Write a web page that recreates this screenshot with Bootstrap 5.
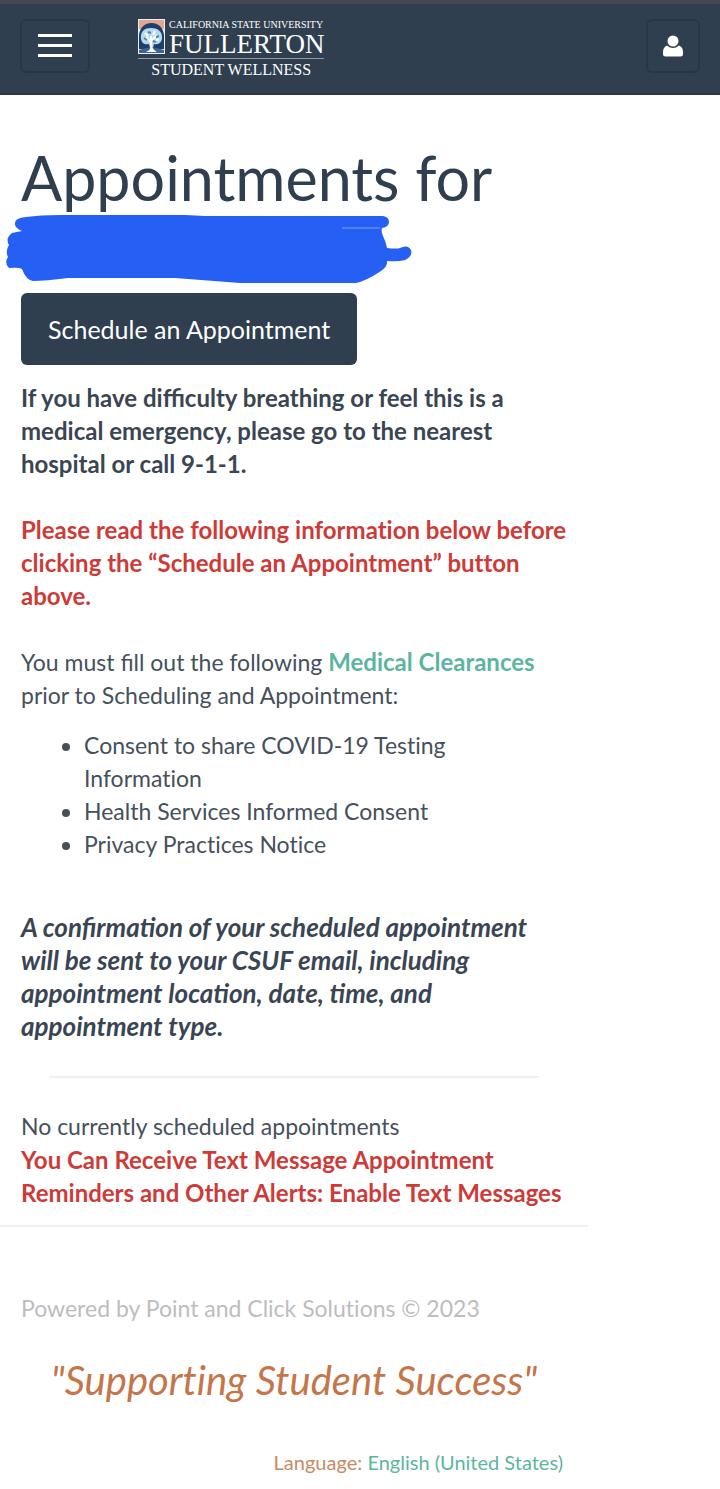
<!DOCTYPE html>
<html lang="en">

<head>
    <meta charset="UTF-8">
    <meta name="viewport" content="width=device-width, initial-scale=1">
    <title>Appointments - Student Wellness</title>
    <link href="https://cdn.jsdelivr.net/npm/bootstrap@5.3.3/dist/css/bootstrap.min.css" rel="stylesheet">
    <style>
        body {
            font-family: Lato, "Liberation Sans", sans-serif;
            font-size: 23px;
            line-height: 33px;
            color: #46505c;
            font-variant-ligatures: no-common-ligatures;
        }

        .with-liga {
            font-variant-ligatures: normal;
        }

        .site-bar {
            background-color: #303f50;
            border-top: 4px solid #45494f;
            border-bottom: 2px solid #2b3848;
            padding: 15px 20px 14px;
        }

        .bar-btn {
            height: 54px;
            border: 2px solid #27374a;
            border-radius: 6px;
            color: #fff;
        }

        .bar-btn.menu-btn {
            width: 70px;
        }

        .bar-btn.user-btn {
            width: 54px;
        }

        .brand {
            font-family: "Liberation Serif", serif;
            color: #fff;
            margin-left: 48px;
        }

        .brand-uni {
            font-size: 10px;
            line-height: 12px;
        }

        .brand-city {
            font-size: 27px;
            line-height: 26px;
        }

        .brand-unit {
            font-size: 16px;
            line-height: 18px;
            border-top: 1px solid #8d99a8;
            margin-top: 1px;
            padding-top: 2px;
        }

        .page-wrap {
            max-width: 588px;
        }

        .page-pad {
            padding-left: 21px;
            padding-right: 21px;
        }

        .page-title {
            font-size: 61px;
            line-height: 70px;
            color: #303f50;
        }

        .scribble {
            margin-left: -16px;
        }

        .btn-schedule {
            background-color: #303f50;
            color: #fff;
            font-size: 25px;
            line-height: 32px;
            padding: 19px 26px;
            border-radius: 6px;
        }

        .strong-text {
            font-size: 24px;
            font-weight: 700;
        }

        .note-text {
            font-size: 26px;
        }

        .ink {
            color: #3a4553;
        }

        .alert-text {
            color: #cd3b38;
        }

        .link-teal {
            color: #5cb5a0;
        }

        .form-list {
            margin: 17px 0 50px;
            padding-left: 63px;
        }

        .thin-rule {
            margin: 33px 28px 32px;
            border-top: 2px solid #eff0f1;
            opacity: 1;
        }

        .page-foot {
            border-top: 2px solid #f0f0f1;
            padding-top: 65px;
        }

        .powered {
            color: #bdbdbf;
        }

        .motto {
            font-size: 40px;
            line-height: 48px;
            color: #c4764a;
            margin: 31px 0 43px;
        }

        .lang-line {
            font-size: 20px;
            line-height: 30px;
            color: #c98a62;
            padding-right: 4px;
        }
    </style>
</head>

<body>
    <!-- Top bar -->
    <header class="site-bar d-flex align-items-start">
        <button type="button" class="btn bar-btn menu-btn p-0 d-flex align-items-center justify-content-center" aria-label="Menu">
            <svg width="36" height="26" viewBox="0 0 36 26" fill="#fff">
                <rect x="1" y="1" width="34" height="3" />
                <rect x="1" y="11" width="34" height="3" />
                <rect x="1" y="21" width="34" height="3" />
            </svg>
        </button>
        <a href="#" class="brand text-decoration-none text-nowrap">
            <span class="d-flex">
                <svg class="me-1 flex-shrink-0" width="27" height="35" viewBox="0 0 27 35">
                    <rect width="27" height="35" fill="#e8eef4" />
                    <rect x="1" y="1" width="25" height="9" fill="#e2a78e" />
                    <path d="M1 16C2 8 7 4 13.500 4S25 8 26 16V30H1Z" fill="#1d3f6c" />
                    <path d="M3 20C2 12 7 9 13 9S25 12 24 20C23 25 18 26 16 25L15 29L21 32H6L12 29L11 25C8 26 4 25 3 20Z" fill="#b9d8ee" />
                    <path d="M13 32V17M13 23L8 18M14 21L19 16M7 14L10 17M17 12L15 16M21 20L17 22" stroke="#fff" stroke-width="2" fill="none" />
                    <path d="M6 19L9 21M10 13L13 14M18 18L21 17M15 22L18 23" stroke="#4d83b8" stroke-width="2" />
                    <path d="M1 31Q13 26 26 31V34H1Z" fill="#3c6592" />
                    <path d="M8 33Q13 31 13 26Q15 31 19 33Z" fill="#fff" />
                </svg>
                <span>
                    <span class="brand-uni d-block">CALIFORNIA STATE UNIVERSITY</span>
                    <span class="brand-city d-block">FULLERTON</span>
                </span>
            </span>
            <span class="brand-unit d-block text-center">STUDENT WELLNESS</span>
        </a>
        <button type="button" class="btn bar-btn user-btn p-0 ms-auto d-flex align-items-center justify-content-center" aria-label="Account">
            <svg width="20" height="22" viewBox="0 0 20 22" fill="#fff">
                <circle cx="10" cy="6" r="5.500" />
                <path d="M4 10.500Q7 13 10 13T16 10.500Q20 12 20 17V19Q20 21.500 17.500 21.500H2.500Q0 21.500 0 19V17Q0 12 4 10.500Z" />
            </svg>
        </button>
    </header>

    <div class="page-wrap">
        <main class="page-pad">
            <h1 class="page-title fw-normal mb-0 pt-5">Appointments for</h1>
            <!-- Name, painted over -->
            <svg class="scribble d-block" width="410" height="72" viewBox="5 214 410 72">
                <path d="M15 224Q15 219 26 218Q40 216 60 216H185L205 217H383Q389 218 389 223T382 229Q381 233 383 237Q386 243 387 249Q397 250 400 249Q408 245 411 251Q413 257 405 261Q398 263 387 262Q388 267 381 272Q366 282 356 284H240L175 279H68Q45 282 33 282Q26 281 22 270Q19 268 9 269Q4 264 8 258Q5 252 9 246Q5 239 12 234L22 232Q14 229 15 224Z" fill="#265ff3" />
                <path d="M342 229H380" stroke="#7fa3ff" stroke-width="1" />
            </svg>
            <button type="button" class="btn btn-schedule d-block mt-2">Schedule an Appointment</button>

            <p class="ink strong-text with-liga mt-3 mb-0">If you have difficulty breathing or feel this is a medical emergency, please go to the nearest hospital or call 9-1-1.</p>
            <br>
            <p class="alert-text strong-text mb-0">Please read the following information below before clicking the “Schedule an Appointment” button above.</p>
            <br>
            <p class="with-liga mb-0">You must fill out the following <a href="#" class="link-teal strong-text text-decoration-none">Medical Clearances</a> prior to Scheduling and Appointment:</p>
            <ul class="form-list">
                <li>Consent to share COVID-19 Testing Information</li>
                <li>Health Services Informed Consent</li>
                <li>Privacy Practices Notice</li>
            </ul>
            <p class="ink note-text with-liga fw-bold fst-italic mb-0">A confirmation of your scheduled appointment will be sent to your CSUF email, including appointment location, date, time, and appointment type.</p>
            <hr class="thin-rule">
            <p class="mb-0">No currently scheduled appointments</p>
            <p class="alert-text strong-text mb-3">You Can Receive Text Message Appointment Reminders and Other Alerts: Enable Text Messages</p>
        </main>

        <footer class="page-foot page-pad">
            <p class="powered mb-0">Powered by Point and Click Solutions © 2023</p>
            <p class="motto fst-italic text-center">"Supporting Student Success"</p>
            <p class="lang-line text-end mb-0">Language: <a href="#" class="link-teal text-decoration-none">English (United States)</a></p>
        </footer>
    </div>

    <script src="https://cdn.jsdelivr.net/npm/bootstrap@5.3.3/dist/js/bootstrap.bundle.min.js"></script>
</body>

</html>
